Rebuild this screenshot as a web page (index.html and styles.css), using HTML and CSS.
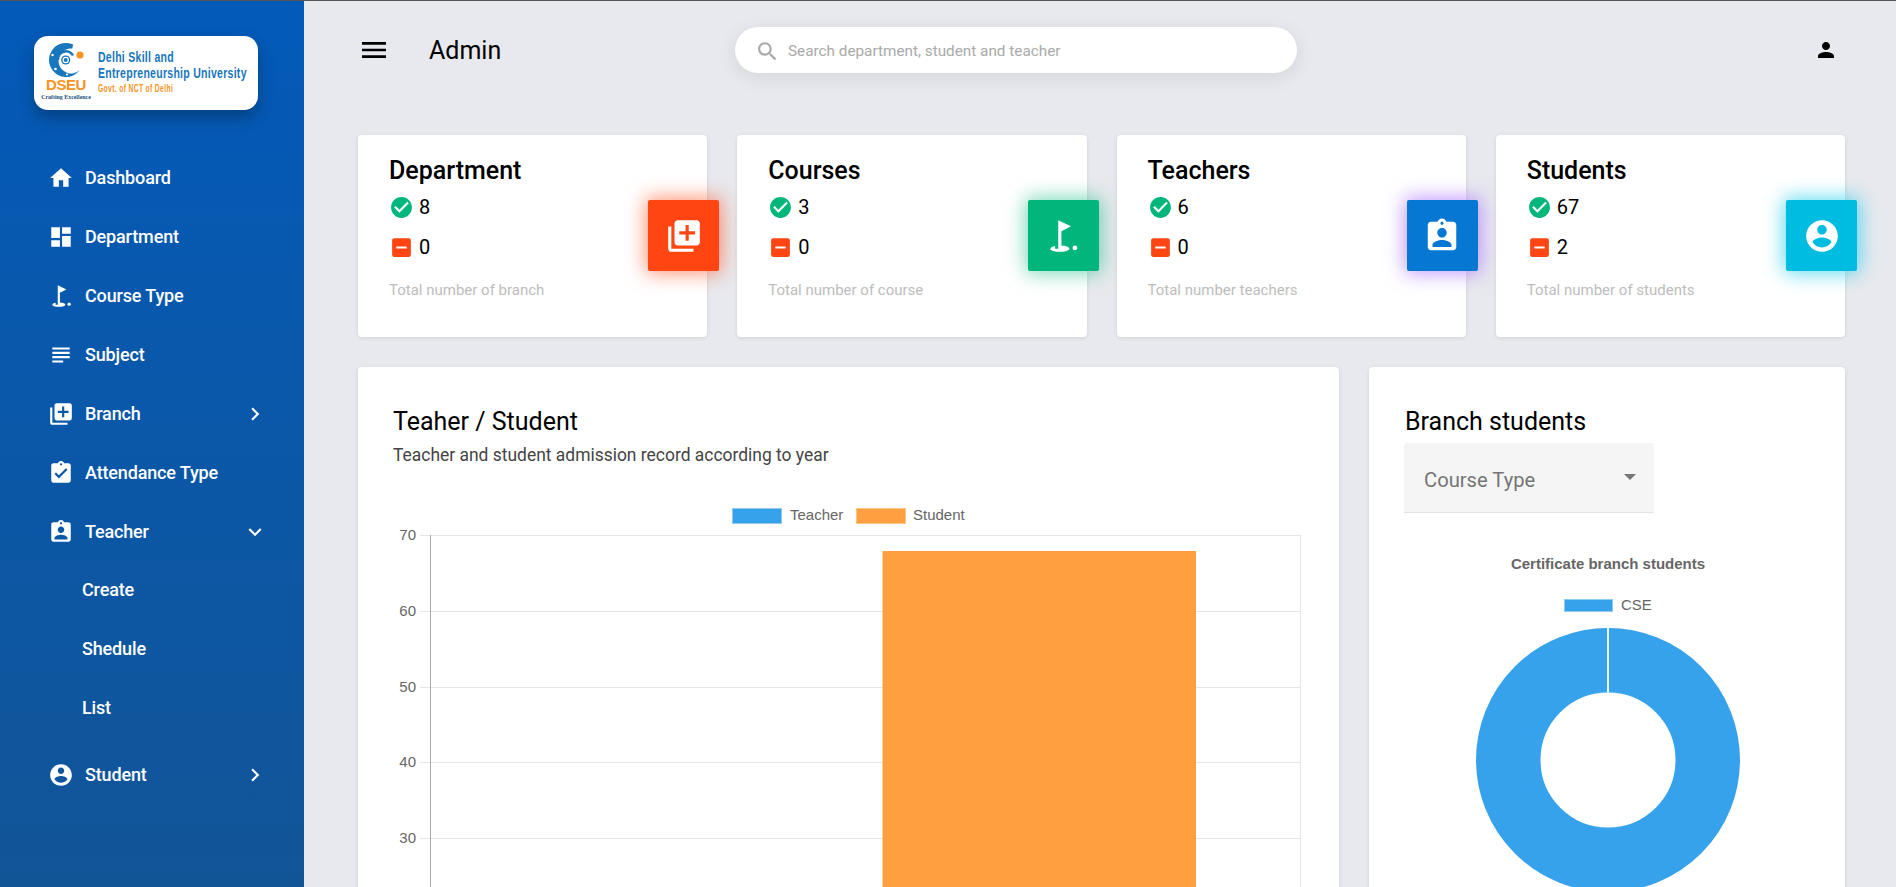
FILE: index.html
```html
<!DOCTYPE html>
<html lang="en">
<head>
<meta charset="utf-8">
<title>Admin</title>
<link rel="stylesheet" href="styles.css">
</head>
<body>
<svg class="defs" aria-hidden="true">
  <symbol id="i-home" viewBox="0 0 24 24"><path d="M10 20v-6h4v6h5v-8h3L12 3 2 12h3v8z"/></symbol>
  <symbol id="i-dash" viewBox="0 0 24 24"><path d="M3 13h8V3H3v10zm0 8h8v-6H3v6zm10 0h8V11h-8v10zm0-18v6h8V3h-8z"/></symbol>
  <symbol id="i-golf" viewBox="0 0 24 24"><circle cx="19.5" cy="19.5" r="1.5"/><path d="M17 5.92L9 2v18H7v-1.73c-1.79.35-3 .99-3 1.73 0 1.1 2.69 2 6 2s6-.9 6-2c0-.99-2.16-1.81-5-1.97V8.98l6-3.06z"/></symbol>
  <symbol id="i-subject" viewBox="0 0 24 24"><path d="M14 17H4v2h10v-2zm6-8H4v2h16V9zM4 15h16v-2H4v2zM4 5v2h16V5H4z"/></symbol>
  <symbol id="i-lib" viewBox="0 0 24 24"><path d="M4 6H2v14c0 1.1.9 2 2 2h14v-2H4V6zm16-4H8c-1.1 0-2 .9-2 2v12c0 1.1.9 2 2 2h12c1.1 0 2-.9 2-2V4c0-1.1-.9-2-2-2zm-1 9h-4v4h-2v-4H9V9h4V5h2v4h4v2z"/></symbol>
  <symbol id="i-att" viewBox="0 0 24 24"><path d="M19 3h-4.18C14.4 1.84 13.3 1 12 1c-1.3 0-2.4.84-2.82 2H5c-1.1 0-2 .9-2 2v14c0 1.1.9 2 2 2h14c1.1 0 2-.9 2-2V5c0-1.1-.9-2-2-2zm-7 0c.55 0 1 .45 1 1s-.45 1-1 1-1-.45-1-1 .45-1 1-1zm-2 14l-4-4 1.41-1.41L10 14.17l6.59-6.59L18 9l-8 8z"/></symbol>
  <symbol id="i-ind" viewBox="0 0 24 24"><path d="M19 3h-4.18C14.4 1.84 13.3 1 12 1c-1.3 0-2.4.84-2.82 2H5c-1.1 0-2 .9-2 2v14c0 1.1.9 2 2 2h14c1.1 0 2-.9 2-2V5c0-1.1-.9-2-2-2zm-7 0c.55 0 1 .45 1 1s-.45 1-1 1-1-.45-1-1 .45-1 1-1zm0 4c1.66 0 3 1.34 3 3s-1.34 3-3 3-3-1.34-3-3 1.34-3 3-3zm6 12H6v-1.4c0-2 4-3.1 6-3.1s6 1.1 6 3.1V19z"/></symbol>
  <symbol id="i-acc" viewBox="0 0 24 24"><path d="M12 2C6.48 2 2 6.48 2 12s4.48 10 10 10 10-4.48 10-10S17.52 2 12 2zm0 3c1.66 0 3 1.34 3 3s-1.34 3-3 3-3-1.34-3-3 1.34-3 3-3zm0 14.2c-2.5 0-4.71-1.28-6-3.22.03-1.99 4-3.08 6-3.08 1.99 0 5.97 1.09 6 3.08-1.29 1.94-3.5 3.22-6 3.22z"/></symbol>
  <symbol id="i-right" viewBox="0 0 24 24"><path d="M10 6L8.59 7.41 13.17 12l-4.58 4.59L10 18l6-6z"/></symbol>
  <symbol id="i-down" viewBox="0 0 24 24"><path d="M16.59 8.59L12 13.17 7.41 8.59 6 10l6 6 6-6z"/></symbol>
  <symbol id="i-check" viewBox="0 0 24 24"><path d="M12 2C6.48 2 2 6.48 2 12s4.48 10 10 10 10-4.48 10-10S17.52 2 12 2zm-2 15l-5-5 1.41-1.41L10 14.17l7.59-7.59L19 8l-9 9z"/></symbol>
  <symbol id="i-minus" viewBox="0 0 24 24"><path d="M19 3H5c-1.1 0-2 .9-2 2v14c0 1.1.9 2 2 2h14c1.1 0 2-.9 2-2V5c0-1.1-.9-2-2-2zm-2 10H7v-2h10v2z"/></symbol>
</svg>

<div class="app">
  <aside class="sidebar">
    <div class="logo">
      <div class="logo-mark">
        <svg class="emblem" viewBox="0 0 36 36">
          <path fill="#1776bc" d="M31.9 26.8A17 17 0 1 1 25.2 1.6L24.2 5.5A12.5 12.5 0 1 0 31.9 26.8Z"/>
          <path fill="none" stroke="#1776bc" stroke-width="2.6" d="M10 17A8 8 0 0 1 25 12.5"/>
          <circle cx="17.7" cy="17" r="4.6" fill="#1776bc"/>
          <circle cx="17.7" cy="17" r="2.6" fill="none" stroke="#fff" stroke-width="1.2"/>
          <circle cx="4.5" cy="12" r="1.2" fill="#fff"/>
          <circle cx="7.5" cy="26" r="1.3" fill="#fff"/>
          <circle cx="19" cy="31.5" r="1.1" fill="#fff"/>
          <circle cx="32" cy="12" r="3.6" fill="#f7931e"/>
        </svg>
        <span class="logo-dseu">DSEU</span>
        <span class="logo-craft">Crafting Excellence</span>
      </div>
      <div class="logo-text">
        <span class="logo-line">Delhi Skill and</span>
        <span class="logo-line">Entrepreneurship University</span>
        <span class="logo-gov">Govt. of NCT of Delhi</span>
      </div>
    </div>
    <nav class="nav">
      <a class="nav-item"><svg class="nav-icon"><use href="#i-home"/></svg><span>Dashboard</span></a>
      <a class="nav-item"><svg class="nav-icon"><use href="#i-dash"/></svg><span>Department</span></a>
      <a class="nav-item"><svg class="nav-icon"><use href="#i-golf"/></svg><span>Course Type</span></a>
      <a class="nav-item"><svg class="nav-icon"><use href="#i-subject"/></svg><span>Subject</span></a>
      <a class="nav-item"><svg class="nav-icon"><use href="#i-lib"/></svg><span>Branch</span><svg class="nav-caret"><use href="#i-right"/></svg></a>
      <a class="nav-item"><svg class="nav-icon"><use href="#i-att"/></svg><span>Attendance Type</span></a>
      <a class="nav-item"><svg class="nav-icon"><use href="#i-ind"/></svg><span>Teacher</span><svg class="nav-caret"><use href="#i-down"/></svg></a>
      <div class="subnav">
        <a class="sub-item">Create</a>
        <a class="sub-item">Shedule</a>
        <a class="sub-item">List</a>
      </div>
      <a class="nav-item"><svg class="nav-icon"><use href="#i-acc"/></svg><span>Student</span><svg class="nav-caret"><use href="#i-right"/></svg></a>
    </nav>
  </aside>

  <main class="main">
    <header class="topbar">
      <svg class="menu-icon" viewBox="0 0 24 24"><path d="M3 18h18v-2H3v2zm0-5h18v-2H3v2zm0-7v2h18V6H3z"/></svg>
      <h1 class="page-title">Admin</h1>
      <div class="search">
        <svg class="search-icon" viewBox="0 0 24 24"><path d="M15.5 14h-.79l-.28-.27C15.41 12.59 16 11.11 16 9.5 16 5.91 13.09 3 9.5 3S3 5.91 3 9.5 5.91 16 9.5 16c1.61 0 3.09-.59 4.23-1.57l.27.28v.79l5 4.99L20.49 19l-4.99-5zm-6 0C7.01 14 5 11.99 5 9.5S7.01 5 9.5 5 14 7.01 14 9.5 11.99 14 9.5 14z"/></svg>
        <span class="search-text">Search department, student and teacher</span>
      </div>
      <svg class="user-icon" viewBox="0 0 24 24"><path d="M12 12c2.21 0 4-1.79 4-4s-1.79-4-4-4-4 1.79-4 4 1.79 4 4 4zm0 2c-2.67 0-8 1.34-8 4v2h16v-2c0-2.66-5.33-4-8-4z"/></svg>
    </header>

    <section class="stats">
      <article class="stat">
        <h2 class="stat-title">Department</h2>
        <div class="stat-row"><svg class="ok"><use href="#i-check"/></svg><span>8</span></div>
        <div class="stat-row"><svg class="no"><use href="#i-minus"/></svg><span>0</span></div>
        <p class="stat-note">Total number of branch</p>
        <div class="stat-badge badge-red"><svg><use href="#i-lib"/></svg></div>
      </article>
      <article class="stat">
        <h2 class="stat-title">Courses</h2>
        <div class="stat-row"><svg class="ok"><use href="#i-check"/></svg><span>3</span></div>
        <div class="stat-row"><svg class="no"><use href="#i-minus"/></svg><span>0</span></div>
        <p class="stat-note">Total number of course</p>
        <div class="stat-badge badge-green"><svg><use href="#i-golf"/></svg></div>
      </article>
      <article class="stat">
        <h2 class="stat-title">Teachers</h2>
        <div class="stat-row"><svg class="ok"><use href="#i-check"/></svg><span>6</span></div>
        <div class="stat-row"><svg class="no"><use href="#i-minus"/></svg><span>0</span></div>
        <p class="stat-note">Total number teachers</p>
        <div class="stat-badge badge-blue"><svg><use href="#i-ind"/></svg></div>
      </article>
      <article class="stat">
        <h2 class="stat-title">Students</h2>
        <div class="stat-row"><svg class="ok"><use href="#i-check"/></svg><span>67</span></div>
        <div class="stat-row"><svg class="no"><use href="#i-minus"/></svg><span>2</span></div>
        <p class="stat-note">Total number of students</p>
        <div class="stat-badge badge-cyan"><svg><use href="#i-acc"/></svg></div>
      </article>
    </section>

    <section class="panels">
      <article class="panel panel-bar">
        <div class="panel-head">
          <h2 class="panel-title">Teaher / Student</h2>
          <p class="panel-sub">Teacher and student admission record according to year</p>
        </div>
        <svg class="bar-chart" viewBox="0 0 981 400">
          <rect class="sw-blue" x="374.5" y="18.5" width="49" height="15"/>
          <text class="lg" x="432" y="30">Teacher</text>
          <rect class="sw-orange" x="498.5" y="18.5" width="49" height="15"/>
          <text class="lg" x="555" y="30">Student</text>
          <g class="grid">
            <path d="M62 45.5H942M62 121.5H942M62 197.5H942M62 272.5H942M62 348.5H942"/>
            <path d="M942.5 45V400"/>
          </g>
          <path class="axis" d="M72.5 45V400"/>
          <rect class="bar" x="524.5" y="61" width="313.5" height="339"/>
          <text class="tick" x="58" y="50">70</text>
          <text class="tick" x="58" y="126">60</text>
          <text class="tick" x="58" y="202">50</text>
          <text class="tick" x="58" y="277">40</text>
          <text class="tick" x="58" y="353">30</text>
        </svg>
      </article>
      <article class="panel panel-donut">
        <div class="panel-head panel-head-tight">
          <h2 class="panel-title">Branch students</h2>
          <div class="select">
            <span class="select-label">Course Type</span>
            <i class="select-arrow"></i>
          </div>
        </div>
        <svg class="donut-chart" viewBox="0 0 476 400">
          <text class="donut-title" x="239" y="37">Certificate branch students</text>
          <rect class="sw-blue" x="195.5" y="67.5" width="48" height="12"/>
          <text class="lg" x="252" y="78">CSE</text>
          <circle class="ring" cx="239" cy="228" r="99.75"/>
          <path class="seam" d="M239 95V162"/>
        </svg>
      </article>
    </section>
  </main>
</div>
</body>
</html>
```

FILE: styles.css
```css
* { box-sizing: border-box; }
html, body { margin: 0; height: 100%; overflow: hidden; }
body { font-family: Roboto, "Liberation Sans", sans-serif; background: #e8e9ee; color: #000; }
.defs { display: none; }

.app { display: flex; height: 100vh; border-top: 1px solid #555; }

/* Sidebar */
.sidebar {
  flex: 0 0 304px;
  background: linear-gradient(180deg, #035ab9, #125597);
  color: #fff;
  padding: 35px 0 0 34px;
}
.logo {
  display: flex;
  width: 224px;
  height: 74px;
  background: #fff;
  border-radius: 14px;
  box-shadow: 0 8px 16px rgba(0, 0, 0, .28);
  padding: 7px 0 0 7px;
}
.logo-mark { width: 50px; display: flex; flex-direction: column; align-items: center; flex: none; }
.emblem { width: 36px; height: 36px; flex: none; }
.logo-dseu { font: bold 15px/12px "Liberation Sans", sans-serif; letter-spacing: -.4px; color: #f7931e; }
.logo-craft { font: bold 5.9px/10px "Liberation Serif", serif; color: #1b4f80; white-space: nowrap; margin-top: 1px; }
.logo-text { display: flex; flex-direction: column; align-items: flex-start; margin-left: 7px; padding-top: 6px; white-space: nowrap; }
.logo-line { font: bold 15px/16px "Liberation Sans", sans-serif; color: #1776bc; letter-spacing: .4px; transform: scaleX(.7); transform-origin: left center; }
.logo-gov { font: bold 11px/13px "Liberation Sans", sans-serif; color: #f7931e; letter-spacing: .5px; margin-top: 1px; transform: scaleX(.62); transform-origin: left center; }

.nav { display: flex; flex-direction: column; margin-top: 38px; padding-left: 14px; }
.nav-item { display: flex; align-items: center; height: 59px; gap: 11px; font-size: 18px; font-weight: 500; letter-spacing: -.15px; }
.nav-icon { width: 26px; height: 26px; fill: #fff; flex: none; }
.nav-caret { width: 26px; height: 26px; fill: #fff; }
.nav-item .nav-caret { margin-left: auto; margin-right: 36px; }
.subnav { display: flex; flex-direction: column; margin-top: -1px; padding-bottom: 8px; }
.sub-item { display: flex; align-items: center; height: 59px; padding-left: 34px; font-size: 18px; font-weight: 500; letter-spacing: -.15px; }

/* Main */
.main { flex: 1; min-width: 0; padding: 26px 51px 0 54px; overflow: hidden; }
.topbar { display: flex; align-items: center; height: 46px; }
.menu-icon { width: 32px; height: 32px; flex: none; }
.page-title { font-size: 25px; font-weight: 400; margin: 0 0 0 39px; width: 306px; flex: none; }
.search {
  display: flex;
  align-items: center;
  width: 562px;
  height: 46px;
  background: #fff;
  border-radius: 23px;
  box-shadow: 0 4px 20px rgba(0, 0, 0, .09);
  padding: 2px 0 0 20px;
}
.search-icon { width: 25px; height: 25px; fill: #a8a8a8; flex: none; }
.search-text { font-size: 15.3px; color: #aaa; margin-left: 8px; }
.user-icon { width: 24px; height: 24px; margin-left: auto; margin-right: 7px; flex: none; }

.stats { display: grid; grid-template-columns: repeat(4, 1fr); gap: 30px; margin-top: 62px; }
.stat {
  position: relative;
  height: 202px;
  background: #fff;
  border-radius: 4px;
  box-shadow: 0 1px 4px rgba(0, 0, 0, .1);
  padding: 21px 0 0 31px;
}
.stat-title { font-size: 25px; font-weight: 500; line-height: 30px; margin: 0; }
.stat-row { display: flex; align-items: center; height: 24px; font-size: 20px; gap: 5px; margin-top: 9px; }
.stat-row + .stat-row { margin-top: 16px; }
.stat-row svg { width: 25px; height: 25px; flex: none; }
.ok { fill: #00b67a; }
.no { fill: #ff4612; }
.stat-note { font-size: 15px; color: #bdbdbd; margin: 21px 0 0; line-height: 20px; }
.stat-badge {
  position: absolute;
  top: 65px;
  right: -12px;
  width: 71px;
  height: 71px;
  border-radius: 2px;
  display: flex;
  align-items: center;
  justify-content: center;
}
.stat-badge svg { width: 38px; height: 38px; fill: #fff; }
.badge-red { background: #ff4612; box-shadow: 0 0 20px 2px rgba(255, 70, 18, .6); }
.badge-green { background: #00b67a; box-shadow: 0 0 20px 2px rgba(0, 182, 122, .55); }
.badge-blue { background: #0678d4; box-shadow: 0 0 20px 2px rgba(156, 92, 255, .65); }
.badge-cyan { background: #00bce0; box-shadow: 0 0 20px 2px rgba(0, 200, 235, .65); }

.panels { display: grid; grid-template-columns: 981px 476px; gap: 30px; margin-top: 30px; }
.panel { background: #fff; border-radius: 4px; box-shadow: 0 1px 4px rgba(0, 0, 0, .1); height: 620px; }
.panel-head { padding: 40px 35px 0; }
.panel-head-tight { padding-left: 36px; }
.panel-title { font-size: 25px; font-weight: 400; line-height: 30px; margin: 0; }
.panel-sub { font-size: 17.45px; line-height: 24px; color: #444; margin: 6px 0 0; }
.bar-chart { display: block; width: 981px; height: 400px; margin-top: 23px; }
.donut-chart { display: block; width: 476px; height: 400px; margin-top: 19px; }

.select {
  position: relative;
  display: flex;
  align-items: center;
  width: 250px;
  height: 70px;
  margin: 6px 0 0 -1px;
  padding: 0 0 0 20px;
  background: #f5f5f5;
  border-bottom: 1px solid #e4e4e4;
  border-radius: 4px 4px 0 0;
  font-size: 20.2px;
  color: #757575;
}
.select-label { padding-top: 4px; }
.select-arrow {
  position: absolute;
  right: 18px;
  top: 31px;
  border-left: 6.5px solid transparent;
  border-right: 6.5px solid transparent;
  border-top: 6.5px solid #757575;
}

/* Chart drawings */
.lg { font: 15px "Liberation Sans", sans-serif; fill: #666; }
.tick { font: 15px "Liberation Sans", sans-serif; fill: #666; text-anchor: end; }
.donut-title { font: bold 15px "Liberation Sans", sans-serif; fill: #666; text-anchor: middle; }
.sw-blue { fill: #36a2eb; stroke: #8ccbf3; }
.sw-orange { fill: #ff9f40; stroke: #ffc48a; }
.grid path { stroke: #e5e5e5; fill: none; }
.axis { stroke: #aaa; fill: none; }
.bar { fill: #ff9f40; }
.ring { fill: none; stroke: #36a2eb; stroke-width: 64.5; }
.seam { stroke: #e8f4fc; stroke-width: 2; }
```
